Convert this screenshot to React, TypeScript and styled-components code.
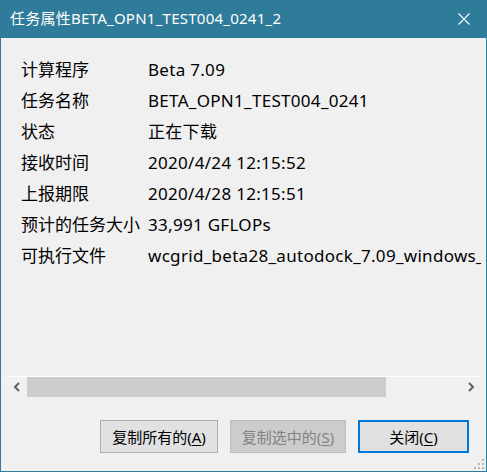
import React from "react";
import styled, { createGlobalStyle } from "styled-components";

const Global = createGlobalStyle`
  html, body { margin: 0; padding: 0; background: #f0f0f0; }
  body { font-family: "Noto Sans", "Noto Sans CJK SC", sans-serif; }
`;

const Window = styled.div`
  width: 487px;
  height: 472px;
  box-sizing: border-box;
  border: 1px solid #2e7b9a;
  border-top: none;
  background: #f0f0f0;
  display: flex;
  flex-direction: column;
  position: relative;
`;

const TitleBar = styled.div`
  height: 38px;
  margin: 0 -1px;
  background: #2e7b9a;
  display: flex;
  align-items: center;
  justify-content: space-between;
  padding: 0 0 0 10px;
  color: #fff;
  font-size: 15px;
  letter-spacing: 0.25px;
  flex-shrink: 0;
`;

const Title = styled.span`
  line-height: 1;
  margin-top: -1px;
`;

const CloseBtn = styled.div`
  width: 46px;
  height: 38px;
  display: flex;
  align-items: center;
  justify-content: center;
`;

const ListArea = styled.div`
  margin: 0 5px;
  height: 359px;
  display: flex;
  flex-direction: column;
  flex-shrink: 0;
`;

const ListBody = styled.div`
  flex: 1;
  overflow: hidden;
  padding: 16px 0 0 15px;
  display: grid;
  grid-template-columns: 127px max-content;
  grid-auto-rows: 31px;
  align-content: start;
  font-size: 17px;
  color: #000;
`;

const Cell = styled.div<{ $value?: boolean }>`
  line-height: 31px;
  white-space: nowrap;
  letter-spacing: ${(p) => (p.$value ? "0.3px" : "0")};
`;

const HScroll = styled.div`
  height: 20px;
  border-top: 1px solid #ffffff;
  display: flex;
  align-items: stretch;
`;

const ArrowBtn = styled.div`
  width: 21px;
  display: flex;
  align-items: center;
  justify-content: center;
`;

const Track = styled.div`
  flex: 1;
  display: flex;
`;

const Thumb = styled.div`
  background: #cdcdcd;
`;

const ButtonRow = styled.div`
  display: flex;
  justify-content: flex-end;
  gap: 12px;
  padding: 23px 17px 0 0;
`;

const Button = styled.div<{ $w: number; $disabled?: boolean; $default?: boolean }>`
  width: ${(p) => p.$w}px;
  height: 33px;
  box-sizing: border-box;
  display: flex;
  align-items: center;
  justify-content: center;
  font-size: 15px;
  background: ${(p) => (p.$disabled ? "#cccccc" : "#e1e1e1")};
  color: ${(p) => (p.$disabled ? "#838383" : "#000")};
  border: ${(p) =>
    p.$default ? "2px solid #0078d7" : p.$disabled ? "1px solid #bfbfbf" : "1px solid #adadad"};
`;

const U = styled.span`
  text-decoration: underline;
  text-underline-offset: 2px;
`;

const Grip = styled.svg`
  position: absolute;
  right: 2px;
  bottom: 2px;
`;

const rows: [string, string][] = [
  ["计算程序", "Beta 7.09"],
  ["任务名称", "BETA_OPN1_TEST004_0241"],
  ["状态", "正在下载"],
  ["接收时间", "2020/4/24 12:15:52"],
  ["上报期限", "2020/4/28 12:15:51"],
  ["预计的任务大小", "33,991 GFLOPs"],
  ["可执行文件", "wcgrid_beta28_autodock_7.09_windows_x86_64"],
];

export default function App() {
  return (
    <>
      <Global />
      <Window>
        <TitleBar>
          <Title>任务属性BETA_OPN1_TEST004_0241_2</Title>
          <CloseBtn>
            <svg width="12" height="12" viewBox="0 0 12 12">
              <path d="M0.5 0.5 L11.5 11.5 M11.5 0.5 L0.5 11.5" stroke="#fff" strokeWidth="1.1" fill="none" />
            </svg>
          </CloseBtn>
        </TitleBar>
        <ListArea>
          <ListBody>
            {rows.map(([k, v]) => (
              <React.Fragment key={k}>
                <Cell>{k}</Cell>
                <Cell $value>{v}</Cell>
              </React.Fragment>
            ))}
          </ListBody>
          <HScroll>
            <ArrowBtn>
              <svg width="8" height="10" viewBox="0 0 8 10">
                <path d="M6 1 L2 5 L6 9" stroke="#606060" strokeWidth="2" fill="none" />
              </svg>
            </ArrowBtn>
            <Track>
              <Thumb style={{ width: "359px" }} />
            </Track>
            <ArrowBtn>
              <svg width="8" height="10" viewBox="0 0 8 10">
                <path d="M2 1 L6 5 L2 9" stroke="#606060" strokeWidth="2" fill="none" />
              </svg>
            </ArrowBtn>
          </HScroll>
        </ListArea>
        <ButtonRow>
          <Button $w={118}>
            复制所有的(<U>A</U>)
          </Button>
          <Button $w={116} $disabled>
            复制选中的(<U>S</U>)
          </Button>
          <Button $w={111} $default>
            关闭(<U>C</U>)
          </Button>
        </ButtonRow>
        <Grip width="12" height="10" viewBox="0 0 12 10">
          <rect x="10" y="0" width="2" height="2" fill="#b8b8b8" />
          <rect x="6" y="4" width="2" height="2" fill="#b8b8b8" />
          <rect x="10" y="4" width="2" height="2" fill="#b8b8b8" />
          <rect x="2" y="8" width="2" height="2" fill="#b8b8b8" />
          <rect x="6" y="8" width="2" height="2" fill="#b8b8b8" />
          <rect x="10" y="8" width="2" height="2" fill="#b8b8b8" />
        </Grip>
      </Window>
    </>
  );
}
